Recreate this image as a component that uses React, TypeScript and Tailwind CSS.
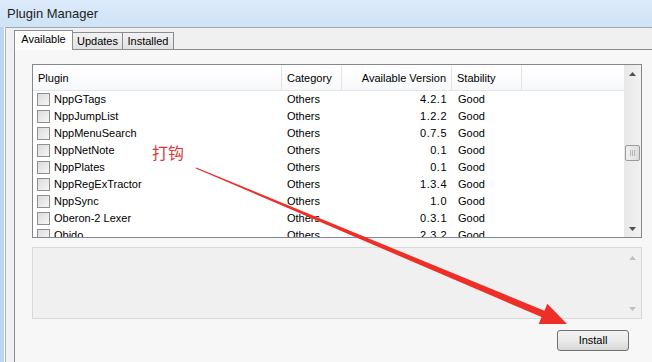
import { useState } from 'react';

const plugins = [
  { name: 'NppGTags', version: '4.2.1' },
  { name: 'NppJumpList', version: '1.2.2' },
  { name: 'NppMenuSearch', version: '0.7.5' },
  { name: 'NppNetNote', version: '0.1' },
  { name: 'NppPlates', version: '0.1' },
  { name: 'NppRegExTractor', version: '1.3.4' },
  { name: 'NppSync', version: '1.0' },
  { name: 'Oberon-2 Lexer', version: '0.3.1' },
  { name: 'Obido', version: '2.3.2' },
];

const tabs = [
  { label: 'Available', w: 'w-[59px]' },
  { label: 'Updates', w: 'w-[51px]' },
  { label: 'Installed', w: 'w-[52px]' },
];

function ScrollArrow({ up, color }: { up?: boolean; color: string }) {
  return (
    <svg width="7" height="4" viewBox="0 0 7 4">
      {up ? <path d="M3.5 0 L7 4 L0 4 Z" fill={color} /> : <path d="M0 0 L7 0 L3.5 4 Z" fill={color} />}
    </svg>
  );
}

export default function App() {
  const [tab, setTab] = useState('Available');
  const [checked, setChecked] = useState<Record<string, boolean>>({});

  return (
    <div className="relative w-[652px] h-[362px] overflow-hidden bg-[#f0f0f0] text-[11px] text-black [font-family:'Liberation_Sans',Arial,sans-serif]">
      {/* title bar */}
      <div className="h-[27px] bg-gradient-to-b from-[#dbeafa] to-[#cfe3f7] flex items-center pl-[7px] text-[13px] text-[#1e1e1e]">
        Plugin Manager
      </div>

      <div className="flex h-[335px]">
        <div className="w-[4px] bg-[#bcd6f2]" />
        <div className="w-[1px] bg-white" />
        <div className="w-[1px] bg-[#a7b5c4]" />
        <div className="flex-1 flex flex-col border-t border-[#a0a8b2] pl-[8px]">
          {/* tabs */}
          <div className="flex items-end h-[20px] mt-[1px] relative z-10">
            {tabs.map((t, i) => (
              <button
                key={t.label}
                onClick={() => setTab(t.label)}
                className={
                  (i > 0 ? '-ml-[1px] ' : '') +
                  (tab === t.label
                    ? t.w + ' h-[20px] bg-white border border-b-0 border-[#898c95] -mb-[1px] pb-[2px] relative z-10'
                    : t.w + ' h-[17px] bg-gradient-to-b from-[#f2f2f2] to-[#e1e1e1] border border-b-0 border-[#898c95]')
                }
              >
                {t.label}
              </button>
            ))}
          </div>

          {/* tab page */}
          <div className="flex-1 border-l border-t border-[#898c95] bg-[#f7f7f7] pl-[17px] pt-[14px] pr-[10px] flex flex-col">
            {/* list */}
            <div className="h-[174px] border border-[#828790] bg-white flex overflow-hidden">
              <div className="flex-1 flex flex-col overflow-hidden pt-[1px]">
                <div className="h-[25px] flex border-b border-[#e5e5e5] bg-gradient-to-b from-white to-[#f7f8fa] shrink-0">
                  <div className="w-[249px] pl-[5px] flex items-center border-r border-[#e3e3e3]">Plugin</div>
                  <div className="w-[60px] pl-[5px] flex items-center border-r border-[#e3e3e3]">Category</div>
                  <div className="w-[110px] pr-[5px] flex items-center justify-end border-r border-[#e3e3e3]">Available Version</div>
                  <div className="w-[70px] pl-[5px] flex items-center border-r border-[#e3e3e3]">Stability</div>
                  <div className="flex-1" />
                </div>
                {plugins.map((p) => (
                  <div key={p.name} className="h-[17px] flex items-center shrink-0">
                    <div className="w-[249px] flex items-center pl-[4px]">
                      <span
                        onClick={() => setChecked({ ...checked, [p.name]: !checked[p.name] })}
                        className="w-[13px] h-[13px] border border-[#8e8f8f] bg-gradient-to-br from-[#dcdcdc] to-[#f6f6f6] mr-[4px] shrink-0 flex items-center justify-center text-[10px] leading-none"
                      >
                        {checked[p.name] ? '✓' : ''}
                      </span>
                      {p.name}
                    </div>
                    <div className="w-[60px] pl-[5px]">Others</div>
                    <div className="w-[110px] pr-[5px] text-right tracking-[0.5px]">{p.version}</div>
                    <div className="w-[70px] pl-[6px]">Good</div>
                  </div>
                ))}
              </div>
              {/* scrollbar */}
              <div className="w-[17px] bg-gradient-to-r from-[#e8e8e8] to-[#f2f2f2] flex flex-col items-center">
                <div className="h-[17px] flex items-center justify-center">
                  <ScrollArrow up color="#505050" />
                </div>
                <div className="h-[63px]" />
                <div className="w-[15px] h-[16px] border border-[#9a9a9a] rounded-[2px] bg-gradient-to-r from-[#f1f1f1] to-[#dcdcdc] flex items-center justify-center gap-[1px]">
                  <div className="w-[1px] h-[6px] bg-[#b8b8b8]" />
                  <div className="w-[1px] h-[6px] bg-[#b8b8b8]" />
                  <div className="w-[1px] h-[6px] bg-[#b8b8b8]" />
                </div>
                <div className="flex-1" />
                <div className="h-[17px] flex items-center justify-center">
                  <ScrollArrow color="#505050" />
                </div>
              </div>
            </div>

            {/* description */}
            <div className="mt-[9px] h-[72px] border border-[#d9d9d9] bg-[#f0f0f0] flex">
              <div className="flex-1" />
              <div className="w-[17px] flex flex-col items-center">
                <div className="h-[17px] flex items-center justify-center mt-[1px]">
                  <ScrollArrow up color="#c0c0c0" />
                </div>
                <div className="flex-1" />
                <div className="h-[17px] flex items-center justify-center mb-[1px]">
                  <ScrollArrow color="#c0c0c0" />
                </div>
              </div>
            </div>

            <div className="flex justify-end mt-[11px] pr-[13px]">
              <button className="w-[72px] h-[21px] border border-[#707070] rounded-[3px] bg-gradient-to-b from-[#f2f2f2] via-[#ebebeb] to-[#d6d6d6]">
                Install
              </button>
            </div>
          </div>
        </div>
      </div>

      {/* annotation */}
      <div className="absolute left-[152px] top-[140px] text-[16px] text-[#d83a3a] [font-family:'Noto_Sans_CJK_SC',sans-serif]">
        打钩
      </div>
      <svg className="absolute left-0 top-0 pointer-events-none" width="652" height="362">
        <polygon
          points="196.2,167.5 544.4,310.7 547.3,303.8 567,324 538.7,324 541.6,317.1 195.8,168.5"
          fill="#ee2f27"
        />
      </svg>
    </div>
  );
}
